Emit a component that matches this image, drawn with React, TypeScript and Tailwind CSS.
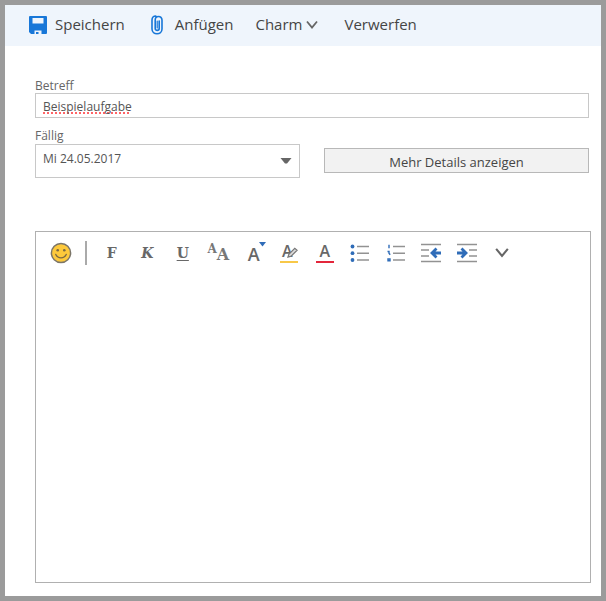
import { useState } from "react";
import type { ReactNode } from "react";

interface ToolButtonProps {
  label: string;
  children: ReactNode;
}

function SaveIcon() {
  return (
    <svg width="18" height="18" viewBox="0 0 18 18" aria-hidden="true">
      <path fill="#1877d8" fillRule="evenodd" d="M1 0H17Q18 0 18 1V17Q18 18 17 18H12.5V14.5H5.5V18H2L0 16V1Q0 0 1 0ZM3.5 2V7.5H14.5V2Z" />
      <path fill="#1877d8" d="M7 16H9.5V18H7Z" />
    </svg>
  );
}

function ClipIcon() {
  return (
    <svg width="12" height="20" viewBox="0 0 12 20" fill="none" stroke="#1877d8" strokeWidth="1.6" strokeLinecap="round" aria-hidden="true">
      <path d="M8.2 6V13.5C8.2 16 4.2 16 4.2 13.5V5C4.2 .3 11 .3 11 5V14C11 20.3 1 20.3 1 14V5C1 2.4 2.5 1 4.8 1" />
      <path d="M6.2 6V13" strokeWidth="1.2" />
    </svg>
  );
}

function Smiley() {
  return (
    <svg width="22" height="22" viewBox="0 0 22 22" aria-hidden="true">
      <circle cx="11" cy="11" r="9.6" fill="#fdc93b" stroke="#7b7568" strokeWidth="1.5" />
      <circle cx="7.7" cy="8.3" r="1.3" fill="#7b6a42" />
      <circle cx="14.3" cy="8.3" r="1.3" fill="#7b6a42" />
      <path d="M5.8 12.5C8 17 14 17 16.2 12.5" fill="none" stroke="#7b6a42" strokeWidth="1.4" strokeLinecap="round" />
    </svg>
  );
}

function Chevron({ size = 12 }: { size?: number }) {
  return (
    <svg width={size} height={size} viewBox="0 0 12 12" fill="none" stroke="#666" strokeWidth="1.8" aria-hidden="true">
      <path d="M1 2.5L6 8.5L11 2.5" />
    </svg>
  );
}

function ListIcon({ numbered = false }: { numbered?: boolean }) {
  return (
    <svg width="20" height="20" viewBox="0 0 20 20" fill="none" aria-hidden="true">
      <path d="M7 3.5H19M7 10.2H19M7 17H19" stroke="#929292" strokeWidth="1.5" />
      {numbered ? (
        <path d="M3 1.7V5.2M1.5 8.5H3V10.3L4.2 11.7M2 16H4V17.8H2Z" stroke="#2f6cb8" strokeWidth="1.4" />
      ) : (
        <g fill="#2f6cb8">
          <circle cx="2.5" cy="3.5" r="1.9" />
          <circle cx="2.5" cy="10.2" r="1.9" />
          <circle cx="2.5" cy="17" r="1.9" />
        </g>
      )}
    </svg>
  );
}

function IndentIcon({ outdent = false }: { outdent?: boolean }) {
  return (
    <svg width="22" height="20" viewBox="0 0 22 20" fill="none" aria-hidden="true">
      <path d="M1 1.5H21M1 18.5H21" stroke="#929292" strokeWidth="1.5" />
      {outdent ? (
        <>
          <path d="M1 7H9M1 13H9" stroke="#929292" strokeWidth="1.5" />
          <path d="M21 10H12M16.5 5.5L12 10L16.5 14.5" stroke="#2f6cb8" strokeWidth="2.8" />
        </>
      ) : (
        <>
          <path d="M13 7H21M13 13H21" stroke="#929292" strokeWidth="1.5" />
          <path d="M1 10H10M5.5 5.5L10 10L5.5 14.5" stroke="#2f6cb8" strokeWidth="2.8" />
        </>
      )}
    </svg>
  );
}

function ToolButton({ label, children }: ToolButtonProps) {
  return (
    <button
      type="button"
      aria-label={label}
      title={label}
      className="flex h-7 items-center justify-center text-[#686868] hover:bg-gray-100"
    >
      {children}
    </button>
  );
}

export default function App() {
  const [subject, setSubject] = useState("Beispielaufgabe");

  return (
    <main className="flex min-h-screen flex-col border-5 border-[#9b9b9b] bg-white font-['Open_Sans',sans-serif] text-[#454545]">
      {/* Command bar */}
      <header className="flex h-[41px] items-center bg-[#eff5fc] pb-0.5 pl-6 text-[15px]">
        <button type="button" className="flex items-center gap-2">
          <SaveIcon />
          Speichern
        </button>
        <button type="button" className="ml-[26px] flex items-center gap-3">
          <ClipIcon />
          Anfügen
        </button>
        <button type="button" className="ml-[22px] flex items-center gap-1">
          Charm
          <Chevron />
        </button>
        <button type="button" className="ml-[26px]">Verwerfen</button>
      </header>

      <form className="flex flex-1 flex-col pt-8 pr-2.5 pb-[13px] pl-[30px] text-[12px]">
        <div className="mr-0.5 flex flex-col">
          <label htmlFor="subject" className="h-[15px] leading-[15px] text-[#666]">Betreff</label>
          <input
            id="subject"
            type="text"
            spellCheck={false}
            value={subject}
            onChange={(e) => setSubject(e.target.value)}
            className="h-[25px] w-full border border-[#c8c8c8] px-[7px] pt-0.5 text-[#555] underline decoration-red-400 decoration-dotted decoration-2 underline-offset-1 outline-none [text-decoration-skip-ink:none]"
          />
        </div>

        {/* Due date and details */}
        <div className="mt-2.5 mr-0.5 grid grid-cols-2 gap-x-6">
          <div className="flex flex-col">
            <label htmlFor="due" className="h-4 leading-4 text-[#666]">Fällig</label>
            <div className="relative">
              <select id="due" className="h-[34px] w-full appearance-none border border-[#c8c8c8] bg-white px-[7px] pb-1 text-[#555] outline-none">
                <option>Mi 24.05.2017</option>
              </select>
              <svg className="pointer-events-none absolute top-3.5 right-2" width="12" height="6" viewBox="0 0 12 6" aria-hidden="true">
                <path d="M0.5 0H11.5L7 5.5H5Z" fill="#666" />
              </svg>
            </div>
          </div>
          <button type="button" className="mt-5 h-[25px] self-start border border-[#b8b8b8] bg-[#f2f2f2] pt-0.5 text-[13px] leading-5">
            Mehr Details anzeigen
          </button>
        </div>

        {/* Editor */}
        <div className="mt-[53px] flex flex-1 flex-col border border-[#b0b0b0]">
          <div role="toolbar" aria-label="Formatierung" className="flex h-[42px] items-center pl-3.5">
            <button type="button" aria-label="Emoji" className="flex h-7 items-center">
              <Smiley />
            </button>
            <span className="mr-[7px] ml-[13px] h-6 w-0.5 bg-[#aaa]" />
            <div className="grid w-[426px] grid-cols-12 font-['DejaVu_Serif',serif] text-[14px] font-bold">
              <ToolButton label="Fett">F</ToolButton>
              <ToolButton label="Kursiv"><i>K</i></ToolButton>
              <ToolButton label="Unterstrichen"><u className="underline-offset-2">U</u></ToolButton>
              <ToolButton label="Schriftart">
                <span className="flex items-start text-[#777]">
                  <span className="text-[12px] leading-4">A</span>
                  <span className="pt-1 text-[16px] leading-5">A</span>
                </span>
              </ToolButton>
              <ToolButton label="Schriftgrad">
                <span className="relative pt-0.5 font-['Open_Sans',sans-serif] text-[18px] leading-6 font-semibold">
                  A
                  <svg className="absolute top-0.5 -right-1.5" width="7" height="5" viewBox="0 0 7 5" aria-hidden="true">
                    <path d="M0 0H7L3.5 4.5Z" fill="#2f6cb8" />
                  </svg>
                </span>
              </ToolButton>
              <ToolButton label="Hervorheben">
                <span className="relative flex h-5 w-[18px] justify-center border-b-2 border-[#f8c848] pr-1 font-['Open_Sans',sans-serif] text-[16px] leading-4 font-semibold">
                  A
                  <svg className="absolute top-1 right-0" width="11" height="11" viewBox="0 0 12 12" aria-hidden="true">
                    <path d="M1 11L2 8L8.5 1.5L11 3.5L4.5 10Z" fill="#ddd" stroke="#777" strokeWidth="1.3" />
                  </svg>
                </span>
              </ToolButton>
              <ToolButton label="Schriftfarbe">
                <span className="flex h-5 w-[18px] justify-center border-b-2 border-[#e3263b] font-['Open_Sans',sans-serif] text-[16px] leading-4 font-semibold">
                  A
                </span>
              </ToolButton>
              <ToolButton label="Aufzählung"><ListIcon /></ToolButton>
              <ToolButton label="Nummerierung"><ListIcon numbered /></ToolButton>
              <ToolButton label="Einzug verkleinern"><IndentIcon outdent /></ToolButton>
              <ToolButton label="Einzug vergrößern"><IndentIcon /></ToolButton>
              <ToolButton label="Mehr"><Chevron size={14} /></ToolButton>
            </div>
          </div>
          <textarea aria-label="Beschreibung" className="w-full flex-1 resize-none px-3.5 outline-none" />
        </div>
      </form>
    </main>
  );
}
